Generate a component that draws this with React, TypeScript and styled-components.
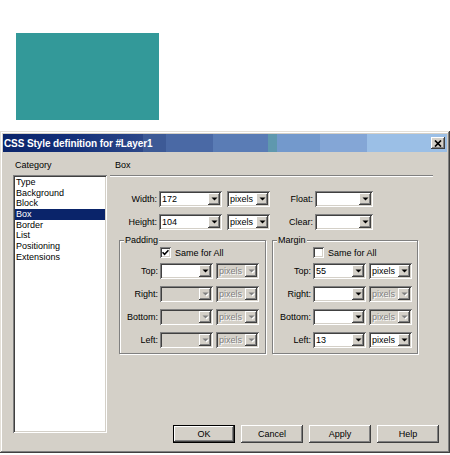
import React from 'react';
import styled, { createGlobalStyle, css } from 'styled-components';

const GlobalStyle = createGlobalStyle`
  html, body {
    margin: 0;
    padding: 0;
    background: #fff;
  }
  body {
    font-family: "Liberation Sans", Arial, sans-serif;
    font-size: 9px;
    color: #000;
  }
`;

const sunken = css`
  box-shadow: inset 1px 1px 0 #808080, inset -1px -1px 0 #fff,
    inset 2px 2px 0 #404040, inset -2px -2px 0 #d4d0c8;
`;

const raised = css`
  box-shadow: inset -1px -1px 0 #404040, inset 1px 1px 0 #fff,
    inset -2px -2px 0 #808080, inset 2px 2px 0 #d4d0c8;
`;

const Page = styled.div`
  width: 450px;
  height: 455px;
  display: flex;
  flex-direction: column;
  overflow: hidden;
`;

const LayerBox = styled.div`
  width: 143px;
  height: 87px;
  margin: 33px 0 0 16px;
  background: #339999;
`;

const Dialog = styled.div`
  margin-top: 11px;
  width: 450px;
  height: 322px;
  box-sizing: border-box;
  padding: 3px;
  background: #d4d0c8;
  box-shadow: inset -1px -1px 0 #404040, inset 1px 1px 0 #e4e0d8,
    inset -2px -2px 0 #808080, inset 2px 2px 0 #fff;
  display: flex;
  flex-direction: column;
`;

const TitleBar = styled.div`
  height: 18px;
  flex: none;
  display: flex;
  align-items: center;
  justify-content: space-between;
  padding: 0 2px 0 1px;
  background: linear-gradient(
    to right,
    #0a246a 0px,
    #14307a 70px,
    #2c4788 140px,
    #3d5a96 140px,
    #3d5a96 163px,
    #4a69a5 163px,
    #4a69a5 210px,
    #5a7cb5 210px,
    #5a7cb5 265px,
    #5f98ae 265px,
    #5f98ae 274px,
    #7399cc 274px,
    #7399cc 317px,
    #84a6d6 317px,
    #84a6d6 364px,
    #9bbfe6 364px,
    #9bbfe6 100%
  );
  color: #fff;
  font-weight: bold;
  font-size: 10px;
  letter-spacing: -0.1px;
`;

const CloseButton = styled.div`
  width: 14px;
  height: 12px;
  background: #d4d0c8;
  ${raised};
  display: flex;
  align-items: center;
  justify-content: center;
`;

const Body = styled.div`
  flex: 1;
  display: flex;
`;

const CategoryColumn = styled.div`
  width: 94px;
  margin-left: 10px;
  display: flex;
  flex-direction: column;
`;

const SectionLabel = styled.div<{ $indent: number }>`
  margin-top: 8px;
  padding-left: ${(p) => p.$indent}px;
  line-height: 11px;
  height: 11px;
`;

const CategoryList = styled.div`
  margin-top: 4px;
  height: 258px;
  box-sizing: border-box;
  padding: 2px;
  background: #fff;
  ${sunken};
`;

const ListItem = styled.div<{ $selected?: boolean }>`
  height: 10.7px;
  line-height: 10.7px;
  padding-left: 1px;
  white-space: nowrap;
  background: ${(p) => (p.$selected ? '#0a246a' : 'transparent')};
  color: ${(p) => (p.$selected ? '#fff' : '#000')};
`;

const PanelColumn = styled.div`
  flex: 1;
  margin-left: 3px;
  padding-right: 8px;
  display: flex;
  flex-direction: column;
`;

const Separator = styled.div`
  margin: 4px 6px 0 0;
  border-top: 1px solid #808080;
  border-bottom: 1px solid #fff;
`;

const TopFields = styled.div`
  margin-top: 14px;
  display: flex;
  flex-direction: column;
  gap: 7px;
`;

const FieldRow = styled.div`
  display: flex;
  align-items: center;
  height: 16px;
`;

const FieldLabel = styled.div<{ $w: number }>`
  width: ${(p) => p.$w}px;
  flex: none;
  box-sizing: border-box;
  padding-right: 2px;
  text-align: right;
  white-space: nowrap;
`;

const ComboFrame = styled.div<{ $w: number; $gap: number; $disabled?: boolean }>`
  width: ${(p) => p.$w}px;
  margin-left: ${(p) => p.$gap}px;
  height: 16px;
  flex: none;
  box-sizing: border-box;
  padding: 2px;
  display: flex;
  background: ${(p) => (p.$disabled ? '#d4d0c8' : '#fff')};
  ${sunken};
`;

const ComboText = styled.div<{ $disabled?: boolean }>`
  flex: 1;
  padding-left: 1px;
  line-height: 12px;
  overflow: hidden;
  white-space: nowrap;
  color: ${(p) => (p.$disabled ? '#808080' : '#000')};
  text-shadow: ${(p) => (p.$disabled ? '1px 1px 0 #fff' : 'none')};
`;

const ArrowButton = styled.div`
  width: 12px;
  height: 12px;
  flex: none;
  background: #d4d0c8;
  ${raised};
  display: flex;
  align-items: center;
  justify-content: center;
`;

const Groups = styled.div`
  margin-top: 5px;
  padding-left: 9px;
  display: flex;
  gap: 6px;
`;

const GroupBox = styled.fieldset<{ $w: number }>`
  width: ${(p) => p.$w}px;
  box-sizing: border-box;
  margin: 0;
  padding: 0 5px 5px 1px;
  min-inline-size: 0;
  border: 1px solid #808080;
  box-shadow: 1px 1px 0 #fff, inset 1px 1px 0 #fff;
`;

const GroupLegend = styled.legend`
  margin-left: 3px;
  padding: 0 1px;
  line-height: 11px;
  background: #d4d0c8;
`;

const CheckRow = styled.label`
  display: flex;
  align-items: center;
  height: 11px;
  margin: 1px 0 0 39px;
  gap: 4px;
`;

const CheckBox = styled.span`
  width: 11px;
  height: 11px;
  box-sizing: border-box;
  background: #fff;
  ${sunken};
  display: flex;
  align-items: center;
  justify-content: center;
`;

const GroupFields = styled.div`
  margin-top: 5px;
  display: flex;
  flex-direction: column;
  gap: 7px;
`;

const ButtonRow = styled.div`
  margin-top: auto;
  margin-bottom: 7px;
  display: flex;
  justify-content: flex-end;
  gap: 6px;
`;

const PushButton = styled.div<{ $default?: boolean }>`
  width: 62px;
  height: 18px;
  box-sizing: border-box;
  display: flex;
  align-items: center;
  justify-content: center;
  background: #d4d0c8;
  ${raised};
  ${(p) =>
    p.$default &&
    css`
      border: 1px solid #000;
    `}
`;

const DownArrow: React.FC<{ disabled?: boolean }> = ({ disabled }) => (
  <svg width="7" height="5" viewBox="0 0 7 5">
    {disabled && <path d="M1.5 1.5h6L4.5 4.5z" fill="#fff" />}
    <path d="M0.5 0.5h6L3.5 3.5z" fill={disabled ? '#808080' : '#000'} />
  </svg>
);

interface ComboProps {
  width: number;
  gap?: number;
  value?: string;
  disabled?: boolean;
}

const Combo: React.FC<ComboProps> = ({ width, gap = 0, value = '', disabled }) => (
  <ComboFrame $w={width} $gap={gap} $disabled={disabled}>
    <ComboText $disabled={disabled}>{value}</ComboText>
    <ArrowButton>
      <DownArrow disabled={disabled} />
    </ArrowButton>
  </ComboFrame>
);

interface SideRow {
  label: string;
  value?: string;
  valueDisabled?: boolean;
  unitDisabled?: boolean;
}

const paddingRows: SideRow[] = [
  { label: 'Top:', unitDisabled: true },
  { label: 'Right:', valueDisabled: true, unitDisabled: true },
  { label: 'Bottom:', valueDisabled: true, unitDisabled: true },
  { label: 'Left:', valueDisabled: true, unitDisabled: true },
];

const marginRows: SideRow[] = [
  { label: 'Top:', value: '55' },
  { label: 'Right:', unitDisabled: true },
  { label: 'Bottom:', unitDisabled: true },
  { label: 'Left:', value: '13' },
];

const categories = [
  'Type',
  'Background',
  'Block',
  'Box',
  'Border',
  'List',
  'Positioning',
  'Extensions',
];

const SideGroup: React.FC<{
  title: string;
  width: number;
  checked: boolean;
  rows: SideRow[];
}> = ({ title, width, checked, rows }) => (
  <GroupBox $w={width}>
    <GroupLegend>{title}</GroupLegend>
    <CheckRow>
      <CheckBox>
        {checked && (
          <svg width="7" height="7" viewBox="0 0 7 7">
            <path d="M0.5 3.2L2.6 5.4L6.5 1.2" fill="none" stroke="#000" strokeWidth="1.6" />
          </svg>
        )}
      </CheckBox>
      Same for All
    </CheckRow>
    <GroupFields>
      {rows.map((r) => (
        <FieldRow key={r.label}>
          <FieldLabel $w={39}>{r.label}</FieldLabel>
          <Combo width={53} value={r.value} disabled={r.valueDisabled} />
          <Combo width={43} gap={3} value="pixels" disabled={r.unitDisabled} />
        </FieldRow>
      ))}
    </GroupFields>
  </GroupBox>
);

export default function App() {
  return (
    <>
      <GlobalStyle />
      <Page>
        <LayerBox />
        <Dialog>
          <TitleBar>
            <span>CSS Style definition for #Layer1</span>
            <CloseButton>
              <svg width="8" height="7" viewBox="0 0 8 7">
                <path d="M1 0.5L7 6.5M7 0.5L1 6.5" stroke="#000" strokeWidth="1.7" />
              </svg>
            </CloseButton>
          </TitleBar>
          <Body>
            <CategoryColumn>
              <SectionLabel $indent={2}>Category</SectionLabel>
              <CategoryList>
                {categories.map((c) => (
                  <ListItem key={c} $selected={c === 'Box'}>
                    {c}
                  </ListItem>
                ))}
              </CategoryList>
            </CategoryColumn>
            <PanelColumn>
              <SectionLabel $indent={5}>Box</SectionLabel>
              <Separator />
              <TopFields>
                <FieldRow>
                  <FieldLabel $w={49}>Width:</FieldLabel>
                  <Combo width={63} value="172" />
                  <Combo width={43} gap={5} value="pixels" />
                  <FieldLabel $w={45}>Float:</FieldLabel>
                  <Combo width={58} />
                </FieldRow>
                <FieldRow>
                  <FieldLabel $w={49}>Height:</FieldLabel>
                  <Combo width={63} value="104" />
                  <Combo width={43} gap={5} value="pixels" />
                  <FieldLabel $w={45}>Clear:</FieldLabel>
                  <Combo width={58} />
                </FieldRow>
              </TopFields>
              <Groups>
                <SideGroup title="Padding" width={147} checked rows={paddingRows} />
                <SideGroup title="Margin" width={146} checked={false} rows={marginRows} />
              </Groups>
              <ButtonRow>
                <PushButton $default>OK</PushButton>
                <PushButton>Cancel</PushButton>
                <PushButton>Apply</PushButton>
                <PushButton>Help</PushButton>
              </ButtonRow>
            </PanelColumn>
          </Body>
        </Dialog>
      </Page>
    </>
  );
}
